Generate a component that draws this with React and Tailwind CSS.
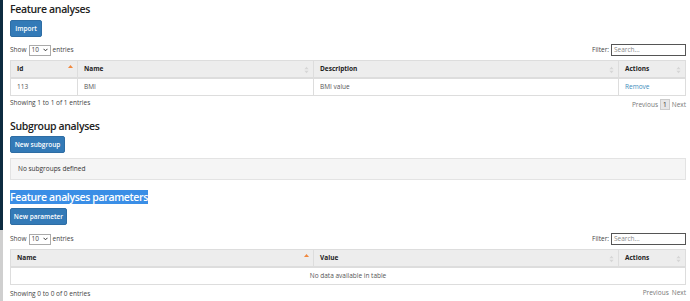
import React from "react";

const SortIcon = ({ active }) =>
  active ? (
    <svg width="5" height="8" viewBox="0 0 5 8" className="absolute right-[4px] top-[3px]">
      <path d="M0 4 L2.5 1 L5 4 Z" fill="#f0883e" />
    </svg>
  ) : (
    <svg width="5" height="8" viewBox="0 0 5 8" className="absolute right-[4px] top-[5px]">
      <path d="M0.5 3.2 L2.5 0.8 L4.5 3.2 Z M0.5 4.8 L2.5 7.2 L4.5 4.8 Z" fill="#d6d6d6" />
    </svg>
  );

const Button = ({ children, w }) => (
  <button
    className={`block h-[17px] ${w} rounded-[2px] border border-[#2e6da4] bg-[#337ab7] text-[6.5px] font-semibold text-white`}
  >
    {children}
  </button>
);

const Controls = () => (
  <div className="flex h-[14px] items-center justify-between text-[6.5px] text-[#444]">
    <div className="flex items-center">
      <span>Show</span>
      <span className="mx-[2px] flex h-[11px] w-[22px] items-center justify-between border border-[#aaa] px-[2px]">
        10
        <svg width="5" height="4" viewBox="0 0 5 4">
          <path d="M0.5 0.8 L2.5 2.8 L4.5 0.8" stroke="#333" strokeWidth="1" fill="none" />
        </svg>
      </span>
      <span>entries</span>
    </div>
    <div className="flex items-center">
      <span className="mr-[2px]">Filter:</span>
      <div className="flex h-[12px] w-[75px] items-center border border-[#555] px-[2px] text-[#888]">
        Search...
      </div>
    </div>
  </div>
);

const Th = ({ children, w, active }) => (
  <th
    className={`relative ${w} border-l border-[#ddd] px-[6px] text-left text-[6.5px] font-bold text-[#222] first:border-l-0`}
  >
    {children}
    <SortIcon active={active} />
  </th>
);

const Title = ({ children, className }) => (
  <h2
    className={`text-[10.5px] font-semibold leading-[14px] tracking-[-0.35px] text-[#222] ${className}`}
  >
    {children}
  </h2>
);

export default function App() {
  return (
    <div className="flex h-[301px] overflow-hidden bg-white font-['Open_Sans',sans-serif]">
      <div className="flex w-[3px] flex-col">
        <div className="h-[230px] bg-[#0d2b40]" />
        <div className="flex-1 bg-[#cfcfcf]" />
      </div>
      <div className="flex-1 pl-[7px] pr-[4px]">
        <Title className="pt-[2px] pb-[4px]">Feature analyses</Title>
        <Button w="w-[32px]">Import</Button>
        <div className="mt-[6px]">
          <Controls />
        </div>
        <table className="mt-[3px] w-full table-fixed border-collapse border border-[#ddd]">
          <thead>
            <tr className="h-[17px] bg-[#ededed]">
              <Th w="w-[67px]" active>
                Id
              </Th>
              <Th w="w-[236px]">Name</Th>
              <Th w="w-[305px]">Description</Th>
              <Th>Actions</Th>
            </tr>
          </thead>
          <tbody>
            <tr className="h-[18px] border-t-2 border-[#ddd] text-[6.5px] text-[#555]">
              <td className="px-[6px]">113</td>
              <td className="border-l border-[#ddd] px-[6px]">BMI</td>
              <td className="border-l border-[#ddd] px-[6px]">BMI value</td>
              <td className="border-l border-[#ddd] px-[6px] text-[#3c8dbc]">Remove</td>
            </tr>
          </tbody>
        </table>
        <div className="flex h-[16px] items-start justify-between text-[6.5px] text-[#444]">
          <span className="pt-[2px]">Showing 1 to 1 of 1 entries</span>
          <div className="flex items-center pt-[3px] text-[#777]">
            <span>Previous</span>
            <span className="mx-[2px] border border-[#ccc] bg-[#e6e6e6] px-[2px] leading-[9px] text-[#333]">1</span>
            <span>Next</span>
          </div>
        </div>

        <Title className="pt-[7px] pb-[3px]">Subgroup analyses</Title>
        <Button w="w-[55px]">New subgroup</Button>
        <div className="mt-[5px] flex h-[22px] items-center border border-[#e3e3e3] bg-[#f5f5f5] px-[7px] text-[6.5px] text-[#333]">
          No subgroups defined
        </div>

        <Title className="mt-[10px] pb-[4px]">
          <span className="bg-[#3a8ee6] text-white">Feature analyses parameters</span>
        </Title>
        <Button w="w-[57px]">New parameter</Button>
        <div className="mt-[7px]">
          <Controls />
        </div>
        <table className="mt-[3px] w-full table-fixed border-collapse border border-[#ddd]">
          <thead>
            <tr className="h-[17px] bg-[#ededed]">
              <Th w="w-[303px]" active>
                Name
              </Th>
              <Th w="w-[305px]">Value</Th>
              <Th>Actions</Th>
            </tr>
          </thead>
          <tbody>
            <tr className="h-[18px] border-t-2 border-[#ddd] text-[6.5px] text-[#555]">
              <td colSpan={3} className="text-center">
                No data available in table
              </td>
            </tr>
          </tbody>
        </table>
        <div className="flex h-[14px] items-start justify-between text-[6.5px] text-[#444]">
          <span className="pt-[4px]">Showing 0 to 0 of 0 entries</span>
          <div className="flex items-center pt-[3px] text-[#777]">
            <span className="mr-[3px]">Previous</span>
            <span>Next</span>
          </div>
        </div>
      </div>
    </div>
  );
}
